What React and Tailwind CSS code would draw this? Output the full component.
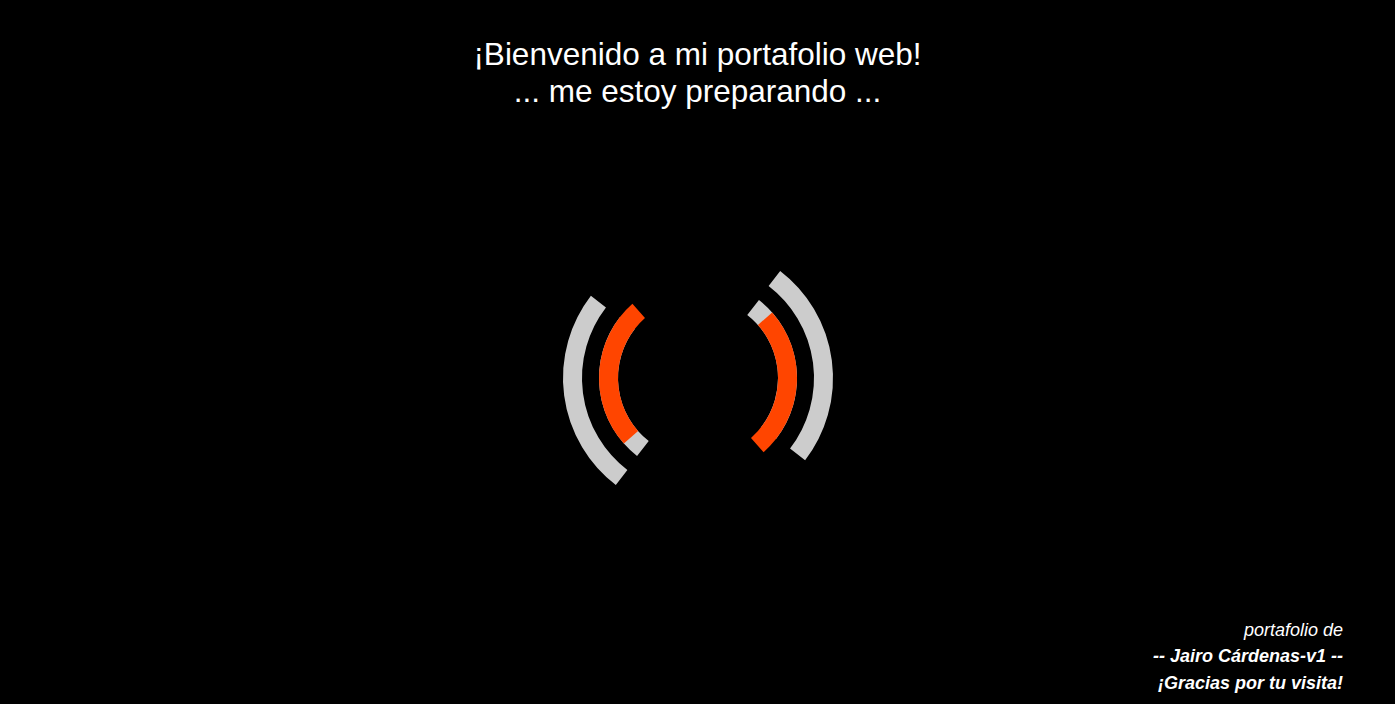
import React from "react";

const CX = 140;
const CY = 140;

function arc(r, a1, a2) {
  const rad = (d) => (d * Math.PI) / 180;
  const x1 = CX + r * Math.cos(rad(a1));
  const y1 = CY + r * Math.sin(rad(a1));
  const x2 = CX + r * Math.cos(rad(a2));
  const y2 = CY + r * Math.sin(rad(a2));
  const large = a2 - a1 > 180 ? 1 : 0;
  return `M ${x1.toFixed(2)} ${y1.toFixed(2)} A ${r} ${r} 0 ${large} 1 ${x2.toFixed(2)} ${y2.toFixed(2)}`;
}

function Loader() {
  const gray = "#cccccc";
  const orange = "#ff4500";
  return (
    <svg width="280" height="280" viewBox="0 0 280 280" className="block">
      <g fill="none" strokeLinecap="butt" strokeWidth="19">
        <path d={arc(125.5, 127.5, 217.5)} stroke={gray} />
        <path d={arc(125.5, -52.5, 37.5)} stroke={gray} />
        <path d={arc(89.5, 128, 218)} stroke={gray} />
        <path d={arc(89.5, -52, 38)} stroke={gray} />
        <path d={arc(89.5, 138.5, 228.5)} stroke={orange} />
        <path d={arc(89.5, -41.5, 48.5)} stroke={orange} />
      </g>
    </svg>
  );
}

export default function App() {
  return (
    <div
      className="flex h-[704px] w-full flex-col bg-black text-white"
      style={{ fontFamily: '"Liberation Sans", Arial, sans-serif' }}
    >
      <div className="pt-[36px] text-center text-[31.5px] leading-[37px]">
        <p>¡Bienvenido a mi portafolio web!</p>
        <p>... me estoy preparando ...</p>
      </div>
      <div className="mt-[128px] flex justify-center">
        <Loader />
      </div>
      <div className="flex-1" />
      <div className="self-end pb-[8px] pr-[52px] text-right text-[18px] italic leading-[26.5px]">
        <p>portafolio de</p>
        <p className="font-bold">-- Jairo Cárdenas-v1 --</p>
        <p className="font-bold">¡Gracias por tu visita!</p>
      </div>
    </div>
  );
}
